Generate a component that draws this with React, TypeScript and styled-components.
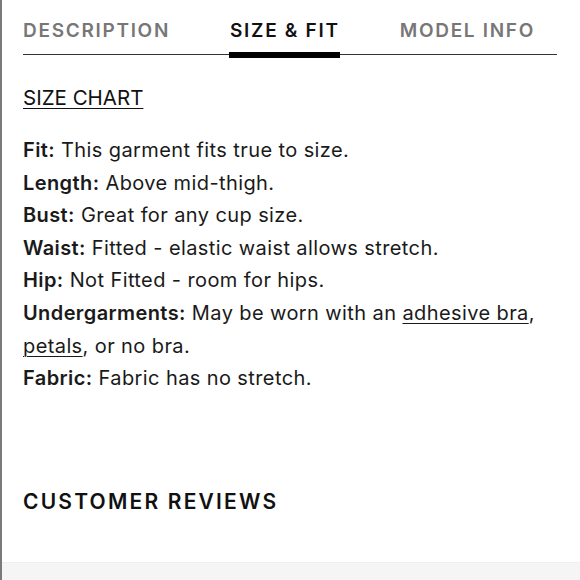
import React from 'react';
import styled, { createGlobalStyle } from 'styled-components';

const GlobalStyle = createGlobalStyle`
  html, body {
    margin: 0;
    padding: 0;
    background: #fff;
  }
  body {
    font-family: 'Inter', 'Liberation Sans', sans-serif;
    color: #1a1a1a;
  }
`;

const Page = styled.div`
  width: 580px;
  height: 580px;
  box-sizing: border-box;
  border-left: 2px solid #7a7a7a;
  display: flex;
  flex-direction: column;
  overflow: hidden;
`;

const Content = styled.div`
  flex: 1;
  padding: 0 23px 0 21px;
  display: flex;
  flex-direction: column;
`;

const Tabs = styled.div`
  display: flex;
  gap: 60px;
  border-bottom: 1px solid #333;
  margin-top: 19px;
`;

const Tab = styled.div<{ $active?: boolean }>`
  position: relative;
  font-size: 19px;
  font-weight: 600;
  letter-spacing: 1.7px;
  color: ${(p) => (p.$active ? '#111' : '#777')};
  padding-bottom: 11px;
  line-height: 24px;
  &::after {
    content: '';
    display: ${(p) => (p.$active ? 'block' : 'none')};
    position: absolute;
    left: -1px;
    right: 0;
    bottom: -4px;
    height: 6px;
    background: #000;
  }
`;

const ChartLink = styled.a`
  display: inline-block;
  align-self: flex-start;
  margin-top: 31px;
  font-size: 20.5px;
  line-height: 23px;
  color: #111;
  text-decoration: underline;
  text-underline-offset: 3px;
  text-decoration-thickness: 1px;
`;

const Specs = styled.div`
  margin-top: 25px;
  font-size: 20px;
  line-height: 32.6px;
  letter-spacing: 0.4px;
  color: #1a1a1a;
`;

const Spec = styled.div``;

const Label = styled.b`
  font-weight: 600;
`;

const Inline = styled.a`
  color: inherit;
  text-decoration: underline;
  text-underline-offset: 3px;
  text-decoration-thickness: 1px;
`;

const ReviewsTitle = styled.h2`
  margin: 94px 0 0;
  font-size: 21px;
  line-height: 25px;
  font-weight: 600;
  letter-spacing: 2.2px;
  color: #111;
`;

const Footer = styled.div`
  height: 17px;
  background: #f5f5f5;
  border-top: 1px solid #efefef;
`;

export default function App() {
  return (
    <>
      <GlobalStyle />
      <Page>
        <Content>
          <Tabs>
            <Tab>DESCRIPTION</Tab>
            <Tab $active>SIZE &amp; FIT</Tab>
            <Tab>MODEL INFO</Tab>
          </Tabs>
          <ChartLink>SIZE CHART</ChartLink>
          <Specs>
            <Spec><Label>Fit:</Label> This garment fits true to size.</Spec>
            <Spec><Label>Length:</Label> Above mid-thigh.</Spec>
            <Spec><Label>Bust:</Label> Great for any cup size.</Spec>
            <Spec><Label>Waist:</Label> Fitted - elastic waist allows stretch.</Spec>
            <Spec><Label>Hip:</Label> Not Fitted - room for hips.</Spec>
            <Spec>
              <Label>Undergarments:</Label> May be worn with an <Inline>adhesive bra</Inline>,
              <br />
              <Inline>petals</Inline>, or no bra.
            </Spec>
            <Spec><Label>Fabric:</Label> Fabric has no stretch.</Spec>
          </Specs>
          <ReviewsTitle>CUSTOMER REVIEWS</ReviewsTitle>
        </Content>
        <Footer />
      </Page>
    </>
  );
}
